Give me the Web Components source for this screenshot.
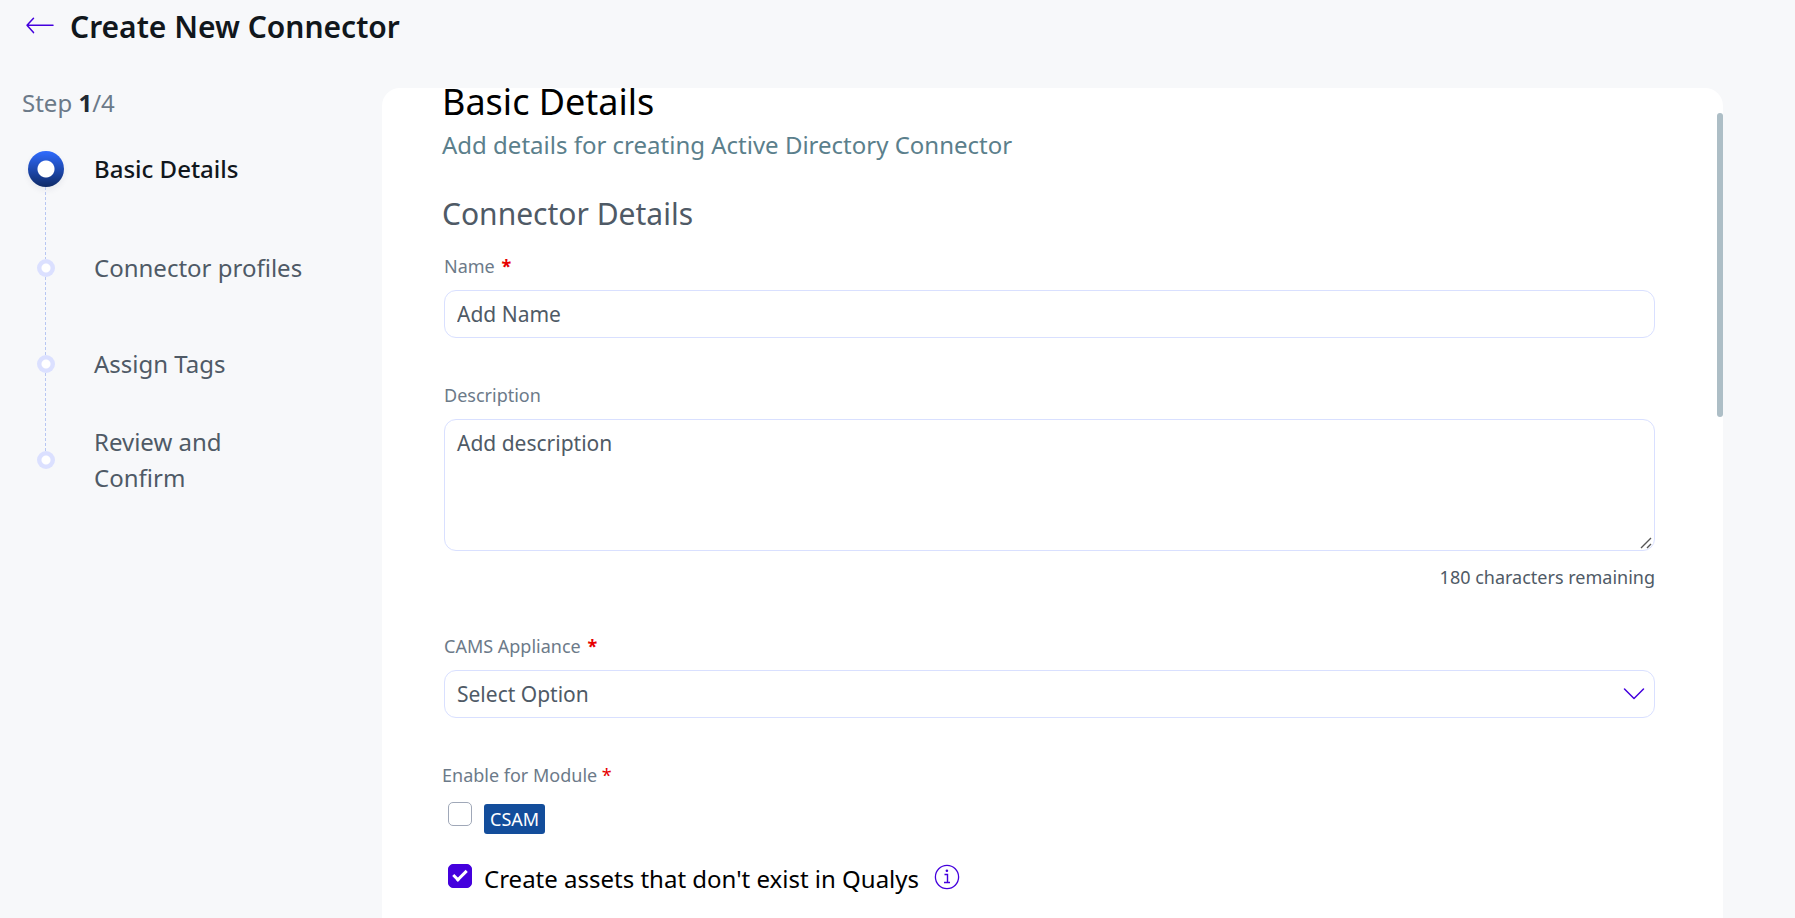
<!DOCTYPE html>
<html lang="en">
<head>
<meta charset="utf-8">
<title>Create New Connector</title>
<style>
  body { margin: 0; background: #f7f8fa; font-family: "Noto Sans", sans-serif; color: #11171c; }
</style>
</head>
<body>
<connector-page></connector-page>

<template id="connector-page">
  <style>
    :host { display: grid; grid-template-columns: 382px minmax(0, 1fr); grid-template-rows: auto minmax(0, 1fr); height: 100vh; padding-right: 72px; box-sizing: border-box;
      --accent: #4400dd; --line: #d9e0ff; --label: #6c7a89; --text: #4f5a66; }
    page-header { grid-column: 1 / -1; }
  </style>
  <page-header>Create New Connector</page-header>
  <step-list current="1" total="4">
    <step-item active>Basic Details</step-item>
    <step-item>Connector profiles</step-item>
    <step-item>Assign Tags</step-item>
    <step-item last>Review and Confirm</step-item>
  </step-list>
  <form-panel>
    <panel-heading>
      Basic Details
      <span slot="sub">Add details for creating Active Directory Connector</span>
      <span slot="section">Connector Details</span>
    </panel-heading>
    <text-field label="Name" placeholder="Add Name" required></text-field>
    <text-area label="Description" placeholder="Add description" note="180 characters remaining"></text-area>
    <select-field label="CAMS Appliance" option="Select Option" required></select-field>
    <module-options></module-options>
  </form-panel>
</template>

<template id="page-header">
  <style>
    :host { display: flex; align-items: flex-start; gap: 15px; padding: 7px 24px 41px; }
    button { display: flex; border: 0; padding: 10px 0; background: none; color: var(--accent); cursor: pointer; }
    h1 { margin: 0; font-size: 30px; line-height: 40px; font-weight: 600; color: #11171c; }
  </style>
  <button type="button" aria-label="Back">
    <svg width="31" height="18" viewBox="0 0 31 18" fill="none" stroke="currentColor" stroke-width="1.5" stroke-linecap="round" stroke-linejoin="round"><path d="M29 8.3H3M9.500 1.200 3 8.300l6.500 7.300"/></svg>
  </button>
  <h1><slot></slot></h1>
</template>

<template id="step-list">
  <style>
    :host { display: block; padding: 0 22px; margin-top: -3px; }
    p { margin: 0; font-size: 24px; line-height: 36px; color: var(--label); }
    b { color: #1f2933; }
    nav { display: flex; flex-direction: column; }
  </style>
  <p>Step <b></b><span></span></p>
  <nav aria-label="Steps"><slot></slot></nav>
</template>

<template id="step-item">
  <style>
    :host { position: relative; display: grid; grid-template-columns: 36px 220px; column-gap: 30px; align-items: center; height: 96px; padding-left: 6px; font-size: 24px; line-height: 36px; color: var(--text); }
    :host([last]) .label { width: 140px; }
    :host([active]) { margin-bottom: 3px; color: #11171c; }
    :host([active]) .label { font-weight: 500; }
    i { justify-self: center; width: 18px; height: 18px; border-radius: 50%; background: radial-gradient(circle, #fff 4px, #dbe0ff 5px); }
    :host([active]) i { width: 36px; height: 36px; background: radial-gradient(circle, #fff 8px, transparent 9px), linear-gradient(#2f6bff, #0e2a66); box-shadow: 0 3px 6px #11224411; }
    :host(:not([last]))::after { content: ""; position: absolute; left: 23px; top: 57px; width: 1px; height: 78px; background: repeating-linear-gradient(#b8c7f2 0 3px, transparent 3px 5px); }
    :host([active])::after { top: 66px; height: 72px; }
  </style>
  <i></i><span class="label"><slot></slot></span>
</template>

<template id="form-panel">
  <style>
    :host { position: relative; display: block; overflow: hidden; background: #fff; border-radius: 18px 18px 0 0; }
    form { display: flex; flex-direction: column; padding: 0 68px 0 60px; }
    .thumb { position: absolute; right: 0; top: 25px; width: 6px; height: 304px; border-radius: 3px; background: #adbec6; }
  </style>
  <form><slot></slot></form>
  <div class="thumb"></div>
</template>

<template id="panel-heading">
  <style>
    :host { display: block; padding-bottom: 18px; }
    h2, p, h3 { margin: 0; font-weight: 400; }
    h2 { font-size: 36px; line-height: 28px; color: #000; }
    p { margin: 11px 0 31px; font-size: 24px; line-height: 36px; color: #5b7f8c; }
    h3 { font-size: 30px; line-height: 40px; color: var(--text); }
  </style>
  <h2><slot></slot></h2>
  <p><slot name="sub"></slot></p>
  <h3><slot name="section"></slot></h3>
</template>

<template id="module-options">
  <style>
    :host { display: block; }
    fieldset { margin: 0; padding: 0; border: 0; min-width: 0; }
    legend { padding: 0 0 10px; font-size: 18px; line-height: 28px; color: var(--label); }
    legend span { color: #e60000; }
    .row { display: flex; align-items: flex-start; height: 36px; margin-bottom: 26px; font-size: 24px; line-height: 36px; color: #000; }
    input { appearance: none; box-sizing: border-box; width: 24px; height: 24px; margin: 3px 12px 0 6px; border: 1px solid #a0a8b8; border-radius: 5px; background: #fff; display: grid; place-items: center; }
    input:checked { border-color: var(--accent); background: var(--accent); }
    input:checked::after { content: ""; box-sizing: border-box; width: 14px; height: 8px; border: solid #fff; border-width: 0 0 3px 3px; transform: translateY(-2px) rotate(-45deg); }
    .badge { display: block; margin-top: 5px; padding: 0 6px; border-radius: 3px; background: #134d9b; color: #fff; font-size: 18px; line-height: 30px; }
    button { display: flex; margin: 3px 0 0 15px; padding: 0; border: 0; background: none; color: var(--accent); }
  </style>
  <fieldset>
    <legend>Enable for Module <span>*</span></legend>
    <div class="row"><input id="csam" type="checkbox"><label for="csam" class="badge">CSAM</label></div>
  </fieldset>
  <div class="row">
    <input id="create" type="checkbox" checked><label for="create">Create assets that don't exist in Qualys</label>
    <button type="button" aria-label="More information">
      <svg width="26" height="26" viewBox="0 0 26 26" fill="none" stroke="currentColor"><circle cx="13" cy="13" r="11.600" stroke-width="1.300"/><path d="M10.500 10.500h3v8M10 18.500h6" stroke-width="1.400"/><circle cx="12.900" cy="6.800" r="1.300" fill="currentColor" stroke="none"/></svg>
    </button>
  </div>
</template>

<script>
  const clone = id => document.getElementById(id).content.cloneNode(true);

  class TemplateElement extends HTMLElement {
    constructor() {
      super();
      this.attachShadow({ mode: "open" }).append(clone(this.localName));
    }
  }

  const fieldStyles = `
    :host { display: block; margin-bottom: 43px; }
    label { display: block; margin: 0 2px 10px; font-size: 18px; line-height: 28px; color: var(--label); }
    label b { color: #e60000; margin-left: 2px; }
    .box { display: grid; align-items: center; margin-left: 2px; }
    input, textarea, select { grid-area: 1 / 1; display: block; box-sizing: border-box; width: 100%; height: 48px; margin: 0; padding: 0 12px; border: 1px solid var(--line); border-radius: 12px; outline: 0; background: #fff; font: 21px/28px "Noto Sans", sans-serif; color: var(--text); }
    textarea { height: 132px; padding-top: 9px; }
    textarea::-webkit-resizer { background: url("data:image/svg+xml,%3Csvg xmlns='http://www.w3.org/2000/svg' width='15' height='15' fill='none' stroke='%23555' stroke-width='1.4'%3E%3Cpath d='M2 13 12 3M8 13l4-4'/%3E%3C/svg%3E") right bottom no-repeat; }
    select { appearance: none; }
    ::placeholder { color: var(--text); opacity: 1; }
    svg { grid-area: 1 / 1; justify-self: end; margin-right: 10px; color: var(--accent); pointer-events: none; }
    p { margin: 12px 0 -2px; text-align: right; font-size: 18px; line-height: 28px; color: var(--text); }
  `;

  class BaseField extends HTMLElement {
    connectedCallback() {
      if (this.shadowRoot) return;
      const star = this.hasAttribute("required") ? " <b>*</b>" : "";
      const note = this.getAttribute("note");
      this.attachShadow({ mode: "open" }).innerHTML =
        `<style>${fieldStyles}</style><label for="control">${this.getAttribute("label")}${star}</label>` +
        `<div class="box">${this.control()}</div>${note ? `<p>${note}</p>` : ""}`;
    }
  }

  customElements.define("text-field", class extends BaseField {
    control() { return `<input id="control" type="text" placeholder="${this.getAttribute("placeholder")}">`; }
  });
  customElements.define("text-area", class extends BaseField {
    control() { return `<textarea id="control" maxlength="180" placeholder="${this.getAttribute("placeholder")}"></textarea>`; }
  });
  customElements.define("select-field", class extends BaseField {
    control() {
      return `<select id="control"><option>${this.getAttribute("option")}</option></select>
        <svg width="22" height="14" viewBox="0 0 22 14" fill="none" stroke="currentColor" stroke-width="1.5" stroke-linecap="round" stroke-linejoin="round"><path d="M1.500 2 11 11.500 20.500 2"/></svg>`;
    }
  });
  customElements.define("step-list", class extends TemplateElement {
    connectedCallback() {
      this.shadowRoot.querySelector("b").textContent = this.getAttribute("current");
      this.shadowRoot.querySelector("span").textContent = "/" + this.getAttribute("total");
    }
  });
  for (const name of ["page-header", "step-item", "form-panel", "panel-heading", "module-options", "connector-page"]) {
    customElements.define(name, class extends TemplateElement {});
  }
</script>
</body>
</html>
